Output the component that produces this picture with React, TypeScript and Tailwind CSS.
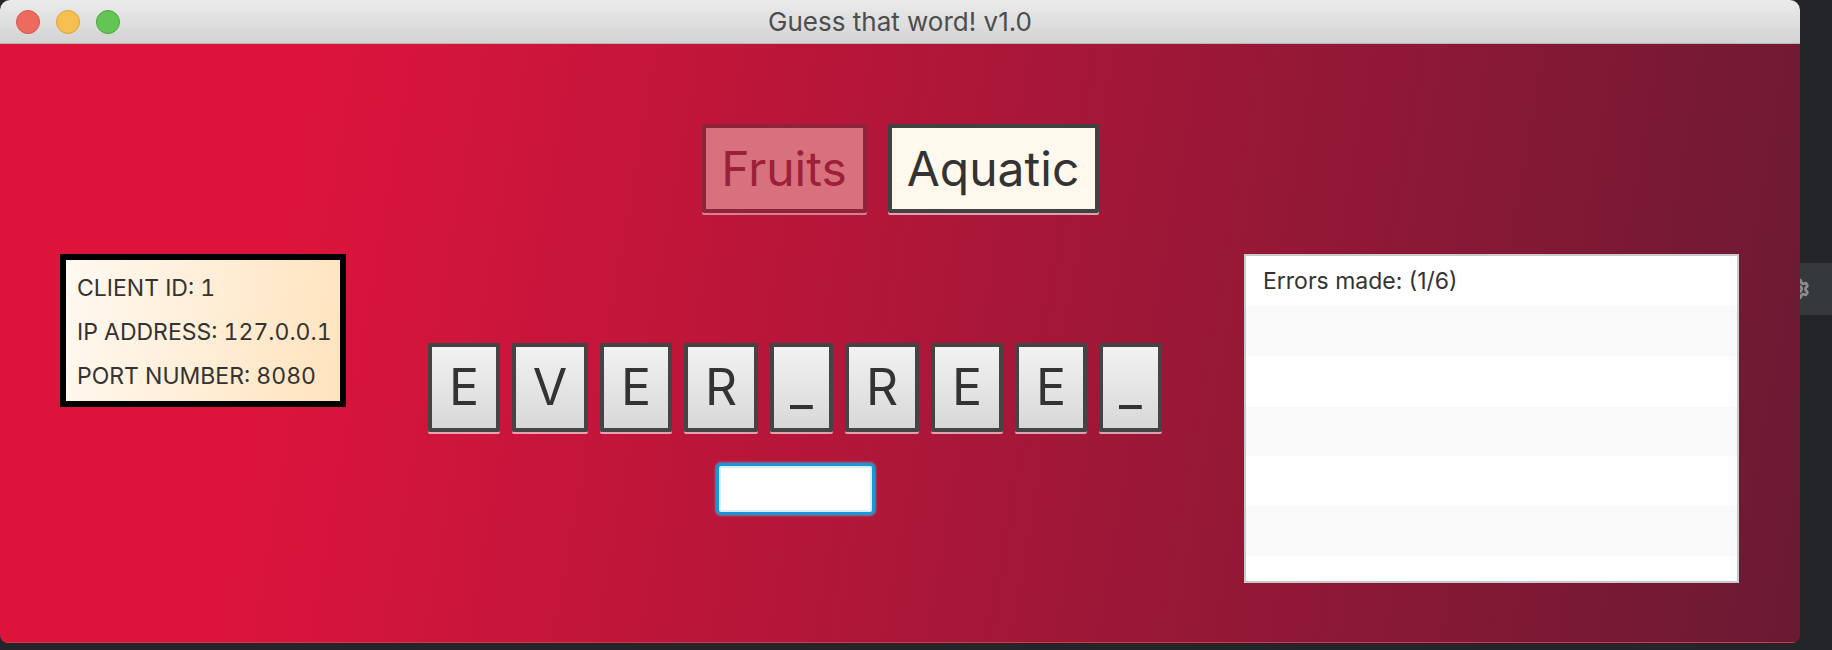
import { Settings } from "lucide-react";

const word = ["E", "V", "E", "R", "_", "R", "E", "E", "_"];

const tileWidth: Record<string, string> = {
  E: "w-[72px]",
  V: "w-[76px]",
  R: "w-[74px]",
  _: "w-[63px]",
};

function TrafficLights() {
  return (
    <div className="absolute left-[16px] top-[10px] flex gap-[16px]">
      <span className="h-[24px] w-[24px] rounded-full border border-[#d8544a] bg-[#ee6a5f]" />
      <span className="h-[24px] w-[24px] rounded-full border border-[#d9a33b] bg-[#f6bf4f]" />
      <span className="h-[24px] w-[24px] rounded-full border border-[#4aa63c] bg-[#62c554]" />
    </div>
  );
}

function InfoBox() {
  return (
    <div className="h-[153px] w-[286px] border-[6px] border-black bg-[linear-gradient(100deg,#fff9f1,#ffe3bd)] pl-[11px] pt-[6px] text-[23px] leading-[44px] text-[#333333] tabular-nums">
      <div>CLIENT ID: 1</div>
      <div>IP ADDRESS: 127.0.0.1</div>
      <div>PORT NUMBER: 8080</div>
    </div>
  );
}

function ErrorsList() {
  const rows = ["bg-[#f9f9f9]", "bg-white", "bg-[#f9f9f9]", "bg-white", "bg-[#f9f9f9]", "bg-white"];
  return (
    <div className="flex h-[329px] w-[495px] flex-col overflow-hidden border-2 border-[#c9c9c9] bg-white">
      <div className="h-[50px] shrink-0 pl-[17px] text-[23px] leading-[50px] text-[#333333]">
        Errors made: (1/6)
      </div>
      {rows.map((bg, i) => (
        <div key={i} className={`h-[50px] shrink-0 ${bg}`} />
      ))}
    </div>
  );
}

export default function App() {
  return (
    <div className="flex h-[650px] w-[1832px] bg-[#242528] font-['Inter',sans-serif]">
      <div className="flex h-[643px] w-[1800px] shrink-0 flex-col overflow-hidden rounded-t-[10px] rounded-b-[8px]">
        <div className="relative flex h-[44px] shrink-0 items-center justify-center border-b border-[#b5b5b5] bg-[linear-gradient(#ebebeb,#d3d3d3)]">
          <TrafficLights />
          <span className="text-[26px] text-[#4d4d4d]">Guess that word! v1.0</span>
        </div>

        <div className="flex flex-1 flex-col border-b border-[#d9344f] bg-[linear-gradient(100deg,#dc143c_17%,#6a1a33_100%)] pt-[80px]">
          <div className="flex justify-center gap-[21px]">
            <button
              type="button"
              className="h-[89px] w-[165px] rounded-[2px] border-4 border-[#8f2339] bg-[#d9707e] text-[48px] text-[#9d2039] shadow-[0_2px_0_rgba(255,255,255,0.45)]"
            >
              Fruits
            </button>
            <button
              type="button"
              className="h-[89px] w-[211px] rounded-[2px] border-4 border-[#424242] bg-[#fff8ec] text-[48px] text-[#333333] shadow-[0_2px_0_rgba(255,255,255,0.6)]"
            >
              Aquatic
            </button>
          </div>

          <div className="mt-[41px] flex items-start px-[60px] pr-[61px]">
            <InfoBox />

            <div className="flex flex-1 flex-col items-center pt-[89px]">
              <div className="flex gap-[12px]">
                {word.map((ch, i) => (
                  <div
                    key={i}
                    className={`flex h-[89px] ${tileWidth[ch]} items-center justify-center rounded-[2px] border-4 border-[#444444] bg-[linear-gradient(#f2f2f2,#d8d8d8)] text-[50px] text-[#333333] shadow-[0_2px_0_rgba(255,255,255,0.6)]`}
                  >
                    {ch}
                  </div>
                ))}
              </div>
              <input
                type="text"
                className="mt-[31px] h-[52px] w-[159px] rounded-[5px] border-[3px] border-[#1697d6] bg-white shadow-[inset_0_0_0_2px_#dbeef8,0_0_3px_#6ec6ee] outline-none"
              />
            </div>

            <ErrorsList />
          </div>
        </div>
      </div>

      <div className="flex-1 pt-[263px]">
        <div className="relative h-[52px] overflow-hidden bg-[#36393c]">
          <Settings className="absolute left-[-12px] top-[15px] h-[22px] w-[22px] text-[#8c8c8c]" strokeWidth={3} />
        </div>
      </div>
    </div>
  );
}
